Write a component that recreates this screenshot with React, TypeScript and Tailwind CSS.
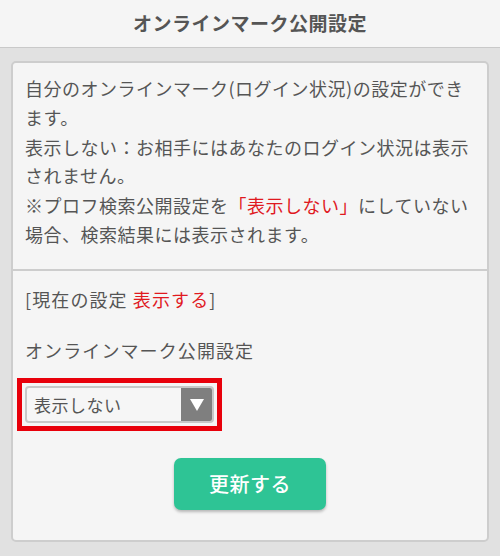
export default function App() {
  return (
    <div
      className="min-h-[556px] w-[500px] bg-[#e1e1e1] text-[#555]"
      style={{ fontFamily: '"Noto Sans CJK JP", "Noto Sans", sans-serif' }}
    >
      <header className="flex h-[48px] items-center justify-center border-b border-[#c9c9c9] bg-[#f5f5f5]">
        <h1 className="text-[19px] font-bold tracking-[0.5px] text-[#555]">オンラインマーク公開設定</h1>
      </header>

      <div className="px-[11px] pt-[13px] pb-[17px]">
        <div className="rounded-[5px] border-2 border-[#cdcdcd] bg-[#f5f5f5]">
          <div className="pl-[12px] pr-[10px] pt-[11px] pb-[21px] text-[18px] leading-[28.5px] tracking-[0.5px]">
            <p className="mb-[1.5px]">自分のオンラインマーク(ログイン状況)の設定ができます。</p>
            <p className="mb-[1.5px]">表示しない：お相手にはあなたのログイン状況は表示されません。</p>
            <p>
              ※プロフ検索公開設定を<span className="text-[#e0191f]">「表示しない」</span>にしていない場合、検索結果には表示されます。
            </p>
          </div>

          <div className="h-[2px] bg-[#cdcdcd]" />

          <div className="px-[12px] pt-[14px] pb-[30px] text-[18px] leading-[28px] tracking-[1.1px]">
            <p>
              [現在の設定 <span className="text-[#e0191f]">表示する</span>]
            </p>
            <p className="mt-[23px]">オンラインマーク公開設定</p>

            <div className="mt-[14px] ml-[-8px] inline-block border-[5px] border-[#e8000b] p-[3px] tracking-[0.5px]">
              <div className="flex h-[37px] w-[189px] overflow-hidden rounded-[4px] border-2 border-[#c8c8c8] bg-[#f6f6f6]">
                <span className="flex-1 pl-[7px] text-[17px] leading-[33px] text-[#555]">表示しない</span>
                <span className="flex w-[31px] items-center justify-center bg-[#7f7f7f]">
                  <svg width="14" height="12" viewBox="0 0 14 12">
                    <path d="M0 0 H14 L7 12 Z" fill="#fff" />
                  </svg>
                </span>
              </div>
            </div>

            <div className="mt-[27px] flex justify-center">
              <button className="h-[52px] w-[152px] rounded-[7px] bg-[#2ec495] text-[20px] font-medium tracking-[0.5px] text-white shadow-[0_2px_3px_rgba(0,0,0,0.25)]">
                更新する
              </button>
            </div>
          </div>
        </div>
      </div>
    </div>
  );
}
